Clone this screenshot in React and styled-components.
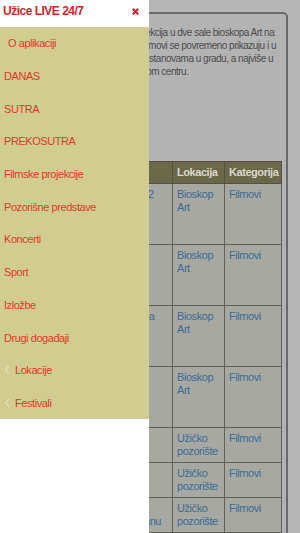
import React from "react";
import styled, { createGlobalStyle } from "styled-components";

const GlobalStyle = createGlobalStyle`
  html, body {
    margin: 0;
    height: 100%;
    overflow: hidden;
  }
  body {
    background: #b6b6b6;
    font-family: "Liberation Sans", Arial, sans-serif;
  }
`;

const Page = styled.div`
  height: 100vh;
  overflow: hidden;
  padding: 12px 12px 0 12px;
  box-sizing: border-box;
`;

const Card = styled.section`
  background: #b3b3b3;
  border: 2px solid #6a6a6a;
  border-radius: 5px;
  padding: 12px 5px 0 5px;
  height: 560px;
`;

const Intro = styled.div`
  padding: 0 0 0 5px;
  margin-bottom: 83px;
  font-size: 10px;
  line-height: 13px;
  letter-spacing: -0.5px;
  color: #4c4c4c;
`;

const Line = styled.div`
  white-space: nowrap;
`;

const Table = styled.table`
  width: 100%;
  table-layout: fixed;
  border-collapse: collapse;
  font-size: 11px;
  line-height: 13px;
  letter-spacing: -0.44px;
`;

const Th = styled.th`
  background: #6b6849;
  color: #d8d8cc;
  font-weight: bold;
  text-align: left;
  padding: 4px 4px;
  border: 1px solid #54523f;
  height: 13px;
`;

const Td = styled.td`
  background: #a8a8a2;
  vertical-align: top;
  padding: 4px 4px;
  border: 1px solid #61605a;
  color: #3b6c94;
  white-space: nowrap;
  overflow: hidden;
`;

const Blank = styled.div`
  height: ${(p) => p.$lines * 13}px;
`;

const Drawer = styled.nav`
  position: fixed;
  top: 0;
  left: 0;
  bottom: 0;
  width: 149px;
  background: #ffffff;
  display: flex;
  flex-direction: column;
`;

const DrawerHead = styled.div`
  height: 27px;
  display: flex;
  justify-content: space-between;
  align-items: flex-start;
  padding: 4px 10px 0 3px;
  box-sizing: border-box;
`;

const Title = styled.div`
  font-size: 12px;
  font-weight: bold;
  line-height: 14px;
  letter-spacing: -0.5px;
  color: #d9232a;
`;

const Close = styled.button`
  border: 0;
  background: none;
  padding: 0;
  margin-top: 4px;
  width: 7px;
  height: 7px;
  display: flex;
`;

const Menu = styled.ul`
  list-style: none;
  margin: 0;
  padding: 0;
  background: #d1cc8f;
`;

const Item = styled.li`
  height: 32.7px;
  display: flex;
  align-items: center;
  gap: 6px;
  padding-left: ${(p) => p.$indent}px;
  font-size: 11px;
  letter-spacing: -0.44px;
  color: #e3392c;
`;

const items = [
  { label: "O aplikaciji", indent: 8 },
  { label: "DANAS", indent: 4 },
  { label: "SUTRA", indent: 4 },
  { label: "PREKOSUTRA", indent: 4 },
  { label: "Filmske projekcije", indent: 4 },
  { label: "Pozorišne predstave", indent: 4 },
  { label: "Koncerti", indent: 4 },
  { label: "Sport", indent: 4 },
  { label: "Izložbe", indent: 4 },
  { label: "Drugi događaji", indent: 4 },
  { label: "Lokacije", indent: 5, sub: true },
  { label: "Festivali", indent: 5, sub: true },
];

const rows = [
  { lines: 4, title: ["Paddington 2"], place: ["Bioskop", "Art"] },
  { lines: 4, title: ["Zver u meni"], place: ["Bioskop", "Art"] },
  { lines: 4, title: ["Moja robotica"], place: ["Bioskop", "Art"] },
  { lines: 4, title: ["Gladijator II"], place: ["Bioskop", "Art"] },
  { lines: 2, title: ["Noć filma"], place: ["Užičko", "pozorište"] },
  { lines: 2, title: ["Kratki film"], place: ["Užičko", "pozorište"] },
  { lines: 2, title: ["Hitchcock:", "Let u Teheranu"], place: ["Užičko", "pozorište"] },
];

const Lines = ({ lines }) =>
  lines.map((l, i) => (
    <React.Fragment key={i}>
      {i > 0 && <br />}
      {l}
    </React.Fragment>
  ));

const Chevron = () => (
  <svg width="4" height="8" viewBox="0 0 4 8">
    <path d="M3.5 0.5 L0.7 4 L3.5 7.5" fill="none" stroke="#f1eed2" strokeWidth="1" />
  </svg>
);

export default function App() {
  return (
    <>
      <GlobalStyle />
      <Page>
        <Card>
          <Intro>
            <Line>Svakoga dana se održava projekcija u dve sale bioskopa Art na</Line>
            <Line>Užicu. Pored ovoga, i domaći filmovi se povremeno prikazuju i u</Line>
            <Line>dvoranama i drugim kulturnim ustanovama u gradu, a najviše u</Line>
            <Line>Užičkom pozorištu i Omladinskom centru.</Line>
          </Intro>
          <Table>
            <colgroup>
              <col style={{ width: 70 }} />
              <col style={{ width: 83 }} />
              <col style={{ width: 52 }} />
              <col style={{ width: 57 }} />
            </colgroup>
            <thead>
              <tr>
                <Th />
                <Th />
                <Th>Lokacija</Th>
                <Th>Kategorija</Th>
              </tr>
            </thead>
            <tbody>
              {rows.map((r, i) => (
                <tr key={i}>
                  <Td>
                    <Blank $lines={r.lines} />
                  </Td>
                  <Td>
                    <Lines lines={r.title} />
                  </Td>
                  <Td>
                    <Lines lines={r.place} />
                  </Td>
                  <Td>Filmovi</Td>
                </tr>
              ))}
            </tbody>
          </Table>
        </Card>
      </Page>
      <Drawer>
        <DrawerHead>
          <Title>Užice LIVE 24/7</Title>
          <Close aria-label="Zatvori">
            <svg width="7" height="7" viewBox="0 0 7 7">
              <path d="M0.8 0.8 L6.2 6.2 M6.2 0.8 L0.8 6.2" stroke="#e0262a" strokeWidth="2.2" />
            </svg>
          </Close>
        </DrawerHead>
        <Menu>
          {items.map((it) => (
            <Item key={it.label} $indent={it.indent}>
              {it.sub && <Chevron />}
              {it.label}
            </Item>
          ))}
        </Menu>
      </Drawer>
    </>
  );
}
